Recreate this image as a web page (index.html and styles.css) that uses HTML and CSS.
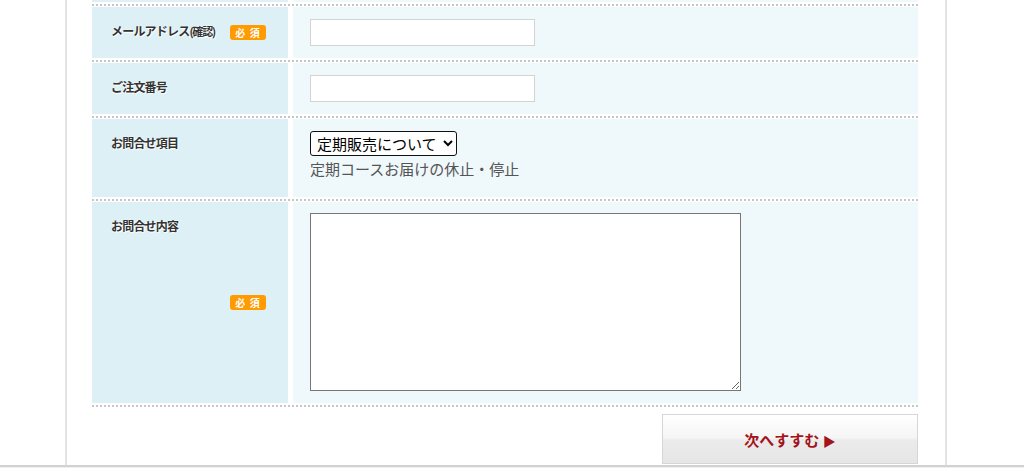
FILE: index.html
```html
<!DOCTYPE html>
<html lang="ja">
<head>
    <meta charset="UTF-8">
    <meta name="viewport" content="width=device-width, initial-scale=1.0">
    <title>お問合せフォーム</title>
    <link rel="stylesheet" href="styles.css">
</head>
<body>
    <div class="wrapper">
        <form class="contact-form">
            <div class="form-table">
                <!-- 上の行の下端 -->
                <div class="form-row row-prev">
                    <div class="label-cell"></div>
                    <div class="value-cell"></div>
                </div>

                <div class="form-row">
                    <div class="label-cell">
                        <span class="label-text">メールアドレス<span class="label-small">(確認)</span></span>
                        <span class="required">必 須</span>
                    </div>
                    <div class="value-cell"><input type="text" class="text-input"></div>
                </div>

                <div class="form-row">
                    <div class="label-cell"><span class="label-text">ご注文番号</span></div>
                    <div class="value-cell"><input type="text" class="text-input"></div>
                </div>

                <div class="form-row row-select">
                    <div class="label-cell"><span class="label-text">お問合せ項目</span></div>
                    <div class="value-cell">
                        <select class="select-box">
                            <option>定期販売について</option>
                        </select>
                        <p class="note">定期コースお届けの休止・停止</p>
                    </div>
                </div>

                <div class="form-row row-textarea">
                    <div class="label-cell">
                        <span class="label-text">お問合せ内容</span>
                        <span class="required">必 須</span>
                    </div>
                    <div class="value-cell"><textarea class="text-area"></textarea></div>
                </div>
            </div>

            <div class="form-actions">
                <button type="button" class="next-button">次へすすむ <span class="arrow">▶</span></button>
            </div>
        </form>
    </div>
    <div class="footer-line"></div>
</body>
</html>
```

FILE: styles.css
```css
body {
    margin: 0;
    background: #fff;
    font-family: "Noto Sans CJK JP", "Noto Sans", sans-serif;
    overflow: hidden;
}
.wrapper {
    box-sizing: border-box;
    width: 882px;
    height: 465px;
    margin-left: 65px;
    padding: 0 27px 0 25px;
    border-left: 2px solid #e2e2e2;
    border-right: 2px solid #e2e2e2;
}
.form-table {
    border-bottom: 2px dotted #c6c6c6;
}
.form-row {
    display: grid;
    grid-template-columns: 196px 1fr;
    column-gap: 5px;
    padding: 1px 0 2px;
    border-top: 2px dotted #c6c6c6;
    height: 51px;
}
.form-row.row-prev {
    height: 2px;
    padding: 0 0 2px;
    border-top: none;
}
.row-prev .label-cell,
.row-prev .value-cell {
    padding: 0;
}
.form-row.row-select {
    height: 78px;
}
.form-row.row-textarea {
    height: 201px;
}
.label-cell {
    display: flex;
    padding: 15px 22px 0 19px;
    background: #dcf0f5;
}
.label-text {
    align-self: flex-start;
    font-size: 12px;
    line-height: 18px;
    font-weight: bold;
    color: #333;
    letter-spacing: -0.8px;
    text-shadow: 0 0 2px #fff, 1px 1px 1px #fff;
}
.label-small {
    font-size: 11px;
    letter-spacing: -1.2px;
}
.required {
    align-self: center;
    margin-left: auto;
    margin-top: -16px;
    width: 36px;
    height: 15px;
    line-height: 15px;
    border-radius: 3px;
    background: #ff9a00;
    color: #fff;
    font-size: 10px;
    font-weight: bold;
    text-align: center;
    letter-spacing: 1px;
}
.row-textarea .required {
    margin-top: -15px;
}
.value-cell {
    padding: 11px 0 0 17px;
    background: #eff8fa;
}
.text-input {
    box-sizing: border-box;
    width: 225px;
    height: 27px;
    border: 1px solid #d3d3d3;
    background: #fff;
    margin: 0;
}
.select-box {
    height: 25px;
    margin: 1px 0 0;
    padding: 0 2px;
    border: 1px solid #111;
    border-radius: 3px;
    background: #fff;
    color: #000;
    font-family: "Noto Sans CJK JP", sans-serif;
    font-size: 15px;
}
.note {
    margin: 2px 0 0;
    font-size: 15px;
    line-height: 22px;
    color: #555;
}
.text-area {
    box-sizing: border-box;
    width: 431px;
    height: 178px;
    margin: 0;
    border: 1px solid #767676;
    background: #fff;
}
.form-actions {
    display: flex;
    justify-content: flex-end;
    padding-top: 7px;
}
.next-button {
    width: 256px;
    height: 50px;
    border: 1px solid #d6d6d6;
    background: linear-gradient(to bottom, #ffffff 0%, #f5f5f5 48%, #ebebeb 52%, #e6e6e6 100%);
    color: #a3141b;
    font-family: "Noto Sans CJK JP", sans-serif;
    font-size: 15px;
    font-weight: bold;
    cursor: pointer;
}
.next-button .arrow {
    font-size: 13px;
}
.footer-line {
    height: 3px;
    border-top: 2px solid #d2d2d2;
    background: #f0f0f0;
}
```
